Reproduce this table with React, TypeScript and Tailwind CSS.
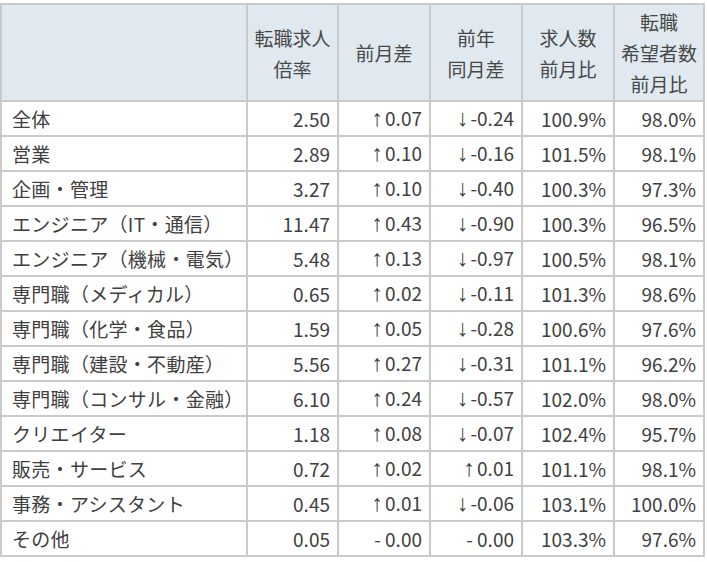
const headers = [
  [""],
  ["転職求人", "倍率"],
  ["前月差"],
  ["前年", "同月差"],
  ["求人数", "前月比"],
  ["転職", "希望者数", "前月比"],
]

const rows = [
  ["全体", "2.50", "↑0.07", "↓-0.24", "100.9%", "98.0%"],
  ["営業", "2.89", "↑0.10", "↓-0.16", "101.5%", "98.1%"],
  ["企画・管理", "3.27", "↑0.10", "↓-0.40", "100.3%", "97.3%"],
  ["エンジニア（IT・通信）", "11.47", "↑0.43", "↓-0.90", "100.3%", "96.5%"],
  ["エンジニア（機械・電気）", "5.48", "↑0.13", "↓-0.97", "100.5%", "98.1%"],
  ["専門職（メディカル）", "0.65", "↑0.02", "↓-0.11", "101.3%", "98.6%"],
  ["専門職（化学・食品）", "1.59", "↑0.05", "↓-0.28", "100.6%", "97.6%"],
  ["専門職（建設・不動産）", "5.56", "↑0.27", "↓-0.31", "101.1%", "96.2%"],
  ["専門職（コンサル・金融）", "6.10", "↑0.24", "↓-0.57", "102.0%", "98.0%"],
  ["クリエイター", "1.18", "↑0.08", "↓-0.07", "102.4%", "95.7%"],
  ["販売・サービス", "0.72", "↑0.02", "↑0.01", "101.1%", "98.1%"],
  ["事務・アシスタント", "0.45", "↑0.01", "↓-0.06", "103.1%", "100.0%"],
  ["その他", "0.05", "- 0.00", "- 0.00", "103.3%", "97.6%"],
]

// arrows are drawn with a narrow glyph, like the source table
function Value({ text }: { text: string }) {
  const arrow = text[0] === "↑" || text[0] === "↓"
  if (!arrow) return <>{text}</>
  return (
    <>
      <span className="font-['Liberation_Sans',sans-serif] text-[23px] leading-none mr-[2px]">{text[0]}</span>
      {text.slice(1)}
    </>
  )
}

export default function App() {
  return (
    <div className="w-[707px] h-[562px] bg-white pt-[3px] font-['Noto_Sans_CJK_JP','Noto_Sans',sans-serif] text-[19px] text-[#404040]">
      <div className="w-[705px] bg-[#cacaca] p-[2px] grid gap-[2px] grid-cols-[244px_89px_90px_90px_90px_88px] grid-rows-[95px_repeat(13,33px)]">
        {headers.map((lines, i) => (
          <div key={i} className="bg-[#dfe9ef] flex flex-col items-center justify-center text-center leading-[31px] text-[#484848]">
            {lines.map((l) => (
              <span key={l}>{l}</span>
            ))}
          </div>
        ))}
        {rows.map((row) =>
          row.map((cell, j) => (
            <div
              key={row[0] + j}
              className={
                j === 0
                  ? "bg-white flex items-center pl-[10px] whitespace-nowrap leading-none tracking-[0.3px]"
                  : "bg-white flex items-center justify-end pr-[7px] whitespace-nowrap leading-none"
              }
            >
              {j === 0 ? cell : <span><Value text={cell} /></span>}
            </div>
          ))
        )}
      </div>
    </div>
  )
}
